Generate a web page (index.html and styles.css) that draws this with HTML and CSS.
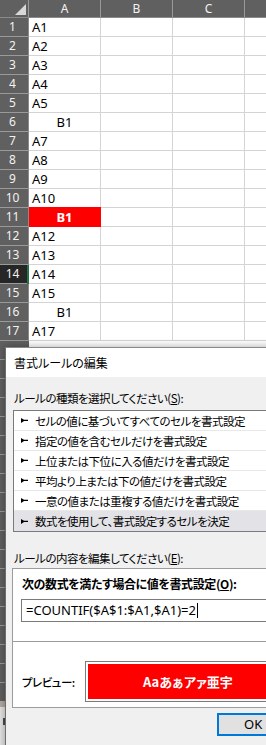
FILE: index.html
```html
<!DOCTYPE html>
<html lang="ja">
<head>
<meta charset="utf-8">
<link rel="stylesheet" href="styles.css">
</head>
<body>
<div class="sheet">
  <div class="hrow">
    <div class="corner"><svg width="28" height="17" viewBox="0 0 28 17"><polygon points="26,4 26,15 15,15" fill="#d8d8d8"/></svg></div>
    <div class="colh">A</div><div class="colh">B</div><div class="colh">C</div><div class="colh"></div>
  </div>
  <div class="row"><div class="rowh">1</div><div class="cell">A1</div><div class="cell"></div><div class="cell"></div><div class="cell"></div></div>
  <div class="row"><div class="rowh">2</div><div class="cell">A2</div><div class="cell"></div><div class="cell"></div><div class="cell"></div></div>
  <div class="row"><div class="rowh">3</div><div class="cell">A3</div><div class="cell"></div><div class="cell"></div><div class="cell"></div></div>
  <div class="row"><div class="rowh">4</div><div class="cell">A4</div><div class="cell"></div><div class="cell"></div><div class="cell"></div></div>
  <div class="row"><div class="rowh">5</div><div class="cell">A5</div><div class="cell"></div><div class="cell"></div><div class="cell"></div></div>
  <div class="row"><div class="rowh">6</div><div class="cell c">B1</div><div class="cell"></div><div class="cell"></div><div class="cell"></div></div>
  <div class="row"><div class="rowh">7</div><div class="cell">A7</div><div class="cell"></div><div class="cell"></div><div class="cell"></div></div>
  <div class="row"><div class="rowh">8</div><div class="cell">A8</div><div class="cell"></div><div class="cell"></div><div class="cell"></div></div>
  <div class="row"><div class="rowh">9</div><div class="cell">A9</div><div class="cell"></div><div class="cell"></div><div class="cell"></div></div>
  <div class="row"><div class="rowh">10</div><div class="cell">A10</div><div class="cell"></div><div class="cell"></div><div class="cell"></div></div>
  <div class="row"><div class="rowh">11</div><div class="cell c hit">B1</div><div class="cell"></div><div class="cell"></div><div class="cell"></div></div>
  <div class="row"><div class="rowh">12</div><div class="cell">A12</div><div class="cell"></div><div class="cell"></div><div class="cell"></div></div>
  <div class="row"><div class="rowh">13</div><div class="cell">A13</div><div class="cell"></div><div class="cell"></div><div class="cell"></div></div>
  <div class="row"><div class="rowh sel">14</div><div class="cell cur">A14</div><div class="cell"></div><div class="cell"></div><div class="cell"></div></div>
  <div class="row"><div class="rowh">15</div><div class="cell">A15</div><div class="cell"></div><div class="cell"></div><div class="cell"></div></div>
  <div class="row"><div class="rowh">16</div><div class="cell c">B1</div><div class="cell"></div><div class="cell"></div><div class="cell"></div></div>
  <div class="row"><div class="rowh">17</div><div class="cell">A17</div><div class="cell"></div><div class="cell"></div><div class="cell"></div></div>
  <div class="below"></div>
  <div class="tabbar"><div class="tabmark"></div></div>
</div>

<div class="dialog">
  <div class="title">書式ルールの編集</div>
  <div class="label">ルールの種類を選択してください(<u>S</u>):</div>
  <div class="list">
    <div class="item"><svg class="ico" width="7" height="5" viewBox="0 0 7 5"><polygon points="0,0 3,1.8 7,1.8 7,3 3,3 0,5" fill="#000"/></svg><span>セルの値に基づいてすべてのセルを書式設定</span></div>
    <div class="item"><svg class="ico" width="7" height="5" viewBox="0 0 7 5"><polygon points="0,0 3,1.8 7,1.8 7,3 3,3 0,5" fill="#000"/></svg><span>指定の値を含むセルだけを書式設定</span></div>
    <div class="item"><svg class="ico" width="7" height="5" viewBox="0 0 7 5"><polygon points="0,0 3,1.8 7,1.8 7,3 3,3 0,5" fill="#000"/></svg><span>上位または下位に入る値だけを書式設定</span></div>
    <div class="item"><svg class="ico" width="7" height="5" viewBox="0 0 7 5"><polygon points="0,0 3,1.8 7,1.8 7,3 3,3 0,5" fill="#000"/></svg><span>平均より上または下の値だけを書式設定</span></div>
    <div class="item"><svg class="ico" width="7" height="5" viewBox="0 0 7 5"><polygon points="0,0 3,1.8 7,1.8 7,3 3,3 0,5" fill="#000"/></svg><span>一意の値または重複する値だけを書式設定</span></div>
    <div class="item selected"><svg class="ico" width="7" height="5" viewBox="0 0 7 5"><polygon points="0,0 3,1.8 7,1.8 7,3 3,3 0,5" fill="#000"/></svg><span>数式を使用して、書式設定するセルを決定</span></div>
  </div>
  <div class="label label2">ルールの内容を編集してください(<u>E</u>):</div>
  <div class="group">
    <div class="upper">
      <div class="blabel">次の数式を満たす場合に値を書式設定(<u>O</u>):</div>
      <div class="input">=COUNTIF($A$1:$A1,$A1)=2<span class="caret"></span></div>
    </div>
    <div class="lower">
      <div class="plabel">プレビュー:</div>
      <div class="pbox"><div class="pinner">Aaあぁアァ亜宇</div></div>
    </div>
  </div>
  <div class="okbtn">OK</div>
</div>
</body>
</html>
```

FILE: styles.css
```css
* { box-sizing: border-box; }
html, body { margin: 0; padding: 0; }
body {
  width: 266px;
  height: 745px;
  overflow: hidden;
  position: relative;
  background: #fff;
  font-family: "Noto Sans", "Noto Sans CJK JP", sans-serif;
}
.sheet { width: 400px; }
.hrow {
  display: flex;
  height: 18px;
  background: #606060;
  border-bottom: 1px solid #8a8a8a;
}
.corner {
  width: 29px;
  height: 17px;
  border-right: 1px solid #9a9a9a;
}
.corner svg { display: block; }
.colh {
  width: 72px;
  height: 17px;
  border-right: 1px solid #9a9a9a;
  color: #f2f2f2;
  font-size: 12px;
  line-height: 17px;
  text-align: center;
}
.row { display: flex; height: 19px; }
.rowh {
  width: 29px;
  background: #606060;
  border-right: 1px solid #8a8a8a;
  border-bottom: 1px solid #9a9a9a;
  color: #f2f2f2;
  font-size: 12px;
  line-height: 18px;
  text-align: center;
  padding-right: 3px;
}
.rowh.sel { background: #262626; }
.cell {
  width: 72px;
  border-right: 1px solid #d4d4d4;
  border-bottom: 1px solid #d4d4d4;
  font-size: 13px;
  line-height: 18px;
  padding-left: 3px;
  color: #000;
  white-space: nowrap;
}
.cell.c { text-align: center; padding-left: 0; }
.cell.hit {
  background: #ff0000;
  border-color: #ff0000;
  color: #fff;
  font-weight: bold;
  box-shadow: 0 -1px 0 #ff0000;
}
.cell.cur { box-shadow: -2px 0 0 #217346; }
.below {
  width: 29px;
  height: 360px;
  background: repeating-linear-gradient(to bottom, #606060 0 18px, #9a9a9a 18px 19px);
}
.tabbar {
  width: 29px;
  height: 60px;
  background: #e4e4e4;
  border-top: 6px solid #b3aaa3;
  position: relative;
}
.tabmark {
  position: absolute;
  left: 3px;
  top: 11px;
  width: 3px;
  height: 7px;
  background: #4a4a4a;
}

.dialog {
  position: absolute;
  left: 5px;
  top: 347px;
  width: 300px;
  height: 420px;
  background: #f0f0f0;
  border-left: 1px solid #6d6d6d;
  border-top: 1px solid #8a8a8a;
  box-shadow: 0 0 8px rgba(0, 0, 0, 0.35);
  display: flex;
  flex-direction: column;
  font-family: "Noto Sans CJK JP", sans-serif;
  font-feature-settings: "palt";
  font-size: 11.5px;
  letter-spacing: -0.5px;
  color: #000;
}
.title {
  height: 29px;
  background: #fff;
  padding-left: 8px;
  line-height: 29px;
  font-size: 12px;
  letter-spacing: 0;
  white-space: nowrap;
}
.label {
  margin: 13px 0 0 8px;
  line-height: 16px;
  white-space: nowrap;
}
.label2 { margin-top: 18px; }
u { text-underline-offset: 1px; }
.list {
  margin: 4px 0 0 7px;
  border: 1px solid #7a7a7a;
  border-right: none;
  background: #fff;
}
.item {
  height: 20px;
  border-bottom: 1px solid #e8e8e8;
  display: flex;
  align-items: center;
  padding-left: 7px;
  white-space: nowrap;
}
.item.selected { border-bottom: none; background: #e3e3e7; }
.ico { flex: none; margin-right: 7px; }
.group {
  margin: 2px 0 0 6px;
  border: 1px solid #9c9c9c;
  border-right: none;
  background: #fff;
}
.upper { padding: 7px 0 19px 0; }
.blabel {
  margin-left: 9px;
  font-weight: bold;
  font-size: 12px;
  letter-spacing: -0.4px;
  line-height: 16px;
  white-space: nowrap;
}
.input {
  margin: 7px 0 0 8px;
  height: 23px;
  border: 1px solid #7a7a7a;
  border-right: none;
  padding-left: 4px;
  font-family: "Noto Sans", sans-serif;
  font-size: 13px;
  letter-spacing: 0;
  line-height: 21px;
  white-space: nowrap;
  display: flex;
  align-items: center;
}
.caret {
  display: inline-block;
  width: 1px;
  height: 15px;
  background: #000;
  margin-left: 1px;
}
.lower {
  border-top: 1px solid #9c9c9c;
  padding: 19px 0 5px 0;
  display: flex;
  align-items: center;
}
.plabel {
  margin-left: 9px;
  width: 63px;
  flex: none;
  font-weight: 500;
  white-space: nowrap;
}
.pbox {
  flex: 1;
  height: 41px;
  border: 1px solid #7a7a7a;
  border-right: none;
  padding: 2px 0 2px 2px;
}
.pinner {
  height: 35px;
  background: #ff0000;
  color: #fff;
  font-weight: bold;
  font-size: 13px;
  letter-spacing: 0;
  line-height: 35px;
  padding-left: 55px;
  white-space: nowrap;
}
.okbtn {
  margin: 5px 0 0 211px;
  height: 23px;
  border: 2px solid #0078d7;
  border-right: none;
  background: #e1e1e1;
  padding-left: 25px;
  font-family: "Noto Sans", sans-serif;
  font-size: 13px;
  letter-spacing: 0;
  line-height: 19px;
}
```
